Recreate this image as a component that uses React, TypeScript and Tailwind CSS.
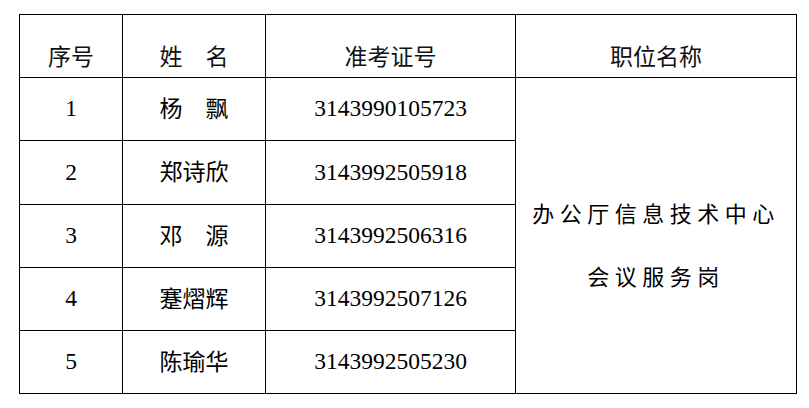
const ROWS = [
  { no: "1", name: "杨　飘", id: "3143990105723" },
  { no: "2", name: "郑诗欣", id: "3143992505918" },
  { no: "3", name: "邓　源", id: "3143992506316" },
  { no: "4", name: "蹇熠辉", id: "3143992507126" },
  { no: "5", name: "陈瑜华", id: "3143992505230" },
];

const sans = "font-['Noto_Sans_CJK_SC',sans-serif]";
const serif = "font-['Liberation_Serif','Noto_Sans_CJK_SC',serif]";

function HeaderCell({ children }: { children: string }) {
  return (
    <div className={`flex items-center justify-center bg-white pt-[19px] text-[23px] leading-none text-[#111] ${sans}`}>
      {children}
    </div>
  );
}

export default function App() {
  return (
    <div className="h-[408px] w-[809px] bg-white pl-[19px] pt-[14px]">
      <div className="grid w-[778px] grid-cols-[102px_142px_249px_280px] grid-rows-[62px_62px_63px_62px_62px_62px] gap-px bg-black p-px">
        <HeaderCell>序号</HeaderCell>
        <HeaderCell>姓　名</HeaderCell>
        <HeaderCell>准考证号</HeaderCell>
        <HeaderCell>职位名称</HeaderCell>

        {ROWS.map((row, i) => (
          <div key={row.no} className="contents">
            <div className={`flex items-center justify-center bg-white text-[23.5px] leading-none text-black ${serif}`}>
              {row.no}
            </div>
            <div className={`flex items-center justify-center bg-white text-[23px] leading-none text-black ${serif}`}>
              {row.name}
            </div>
            <div className={`flex items-center justify-center bg-white text-[23.5px] leading-none text-black ${serif}`}>
              {row.id}
            </div>
            {i === 0 ? (
              <div
                className={`col-start-4 row-span-5 row-start-2 flex flex-col items-center justify-center bg-white pt-[20px] text-[22px] leading-[63px] tracking-[5.5px] text-black ${serif}`}
              >
                <span>办公厅信息技术中心</span>
                <span>会议服务岗</span>
              </div>
            ) : null}
          </div>
        ))}
      </div>
    </div>
  );
}
